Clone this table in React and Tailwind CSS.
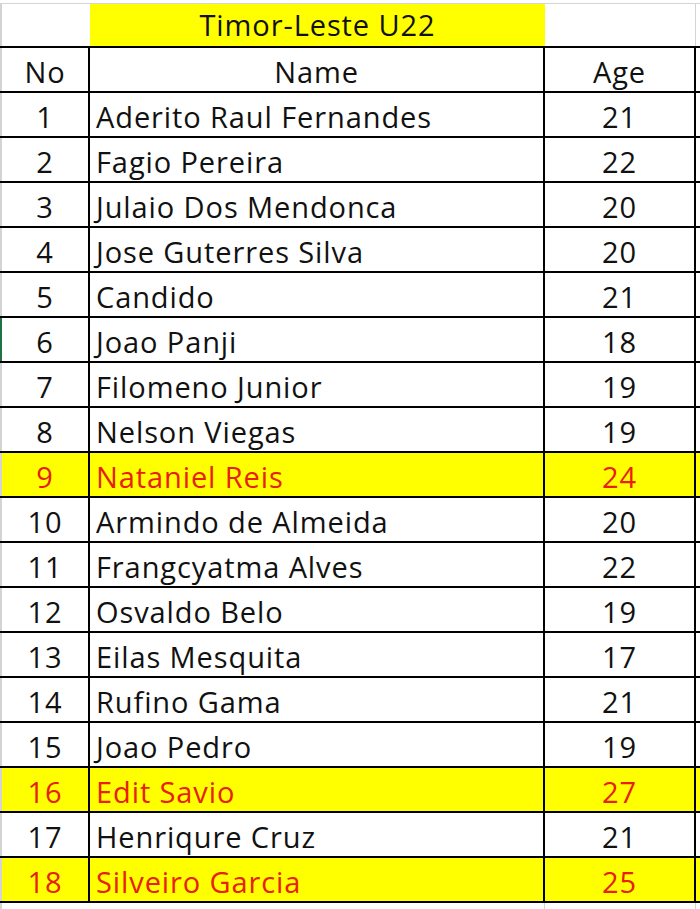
import React from "react";

const players = [
  { no: 1, name: "Aderito Raul Fernandes", age: 21 },
  { no: 2, name: "Fagio Pereira", age: 22 },
  { no: 3, name: "Julaio Dos Mendonca", age: 20 },
  { no: 4, name: "Jose Guterres Silva", age: 20 },
  { no: 5, name: "Candido", age: 21 },
  { no: 6, name: "Joao Panji", age: 18, selected: true },
  { no: 7, name: "Filomeno Junior", age: 19 },
  { no: 8, name: "Nelson Viegas", age: 19 },
  { no: 9, name: "Nataniel Reis", age: 24, over: true },
  { no: 10, name: "Armindo de Almeida", age: 20 },
  { no: 11, name: "Frangcyatma Alves", age: 22 },
  { no: 12, name: "Osvaldo Belo", age: 19 },
  { no: 13, name: "Eilas Mesquita", age: 17 },
  { no: 14, name: "Rufino Gama", age: 21 },
  { no: 15, name: "Joao Pedro", age: 19 },
  { no: 16, name: "Edit Savio", age: 27, over: true },
  { no: 17, name: "Henriqure Cruz", age: 21 },
  { no: 18, name: "Silveiro Garcia", age: 25, over: true },
];

function Row({ no, name, age, over, selected, header }) {
  const bg = over ? "bg-[#ffff00] text-[#e8200c]" : "bg-white text-[#111]";
  return (
    <div className={`flex h-[45px] border-b-2 border-black ${bg}`}>
      <div
        className={`w-[90px] flex items-end justify-center pb-[5px] border-r-2 border-black border-l-2 ${
          selected ? "border-l-[#217346]" : "border-l-[#d4d4d4]"
        }`}
      >
        {no}
      </div>
      <div
        className={`w-[455px] flex items-end pb-[5px] border-r-2 border-black ${
          header ? "justify-center" : "pl-[6px]"
        }`}
      >
        {name}
      </div>
      <div className="w-[151px] flex items-end justify-center pb-[5px] border-r-2 border-black">
        {age}
      </div>
    </div>
  );
}

export default function App() {
  return (
    <div
      className="w-[700px] h-[909px] bg-white overflow-hidden text-[29px] leading-none tracking-[0.9px]"
      style={{ fontFamily: '"Open Sans", "Liberation Sans", sans-serif' }}
    >
      {/* sheet gridline above the title */}
      <div className="h-[4px] border-b border-[#d4d4d4]" />

      {/* Title row */}
      <div className="flex h-[44px] border-b-2 border-black">
        <div className="w-[90px] border-l-2 border-[#d4d4d4]" />
        <div className="w-[455px] bg-[#ffff00] flex items-end justify-center pb-[7px] text-[#111]">
          Timor-Leste U22
        </div>
        <div className="w-[151px] border-r border-[#d4d4d4]" />
      </div>

      <Row no="No" name="Name" age="Age" header />
      {players.map((p) => (
        <Row key={p.no} {...p} />
      ))}

      <div className="flex h-[10px]">
        <div className="w-[90px] border-l-2 border-[#d4d4d4]" />
        <div className="w-[455px] border-r border-[#d4d4d4]" />
        <div className="w-[151px] border-r border-[#d4d4d4]" />
      </div>
    </div>
  );
}
